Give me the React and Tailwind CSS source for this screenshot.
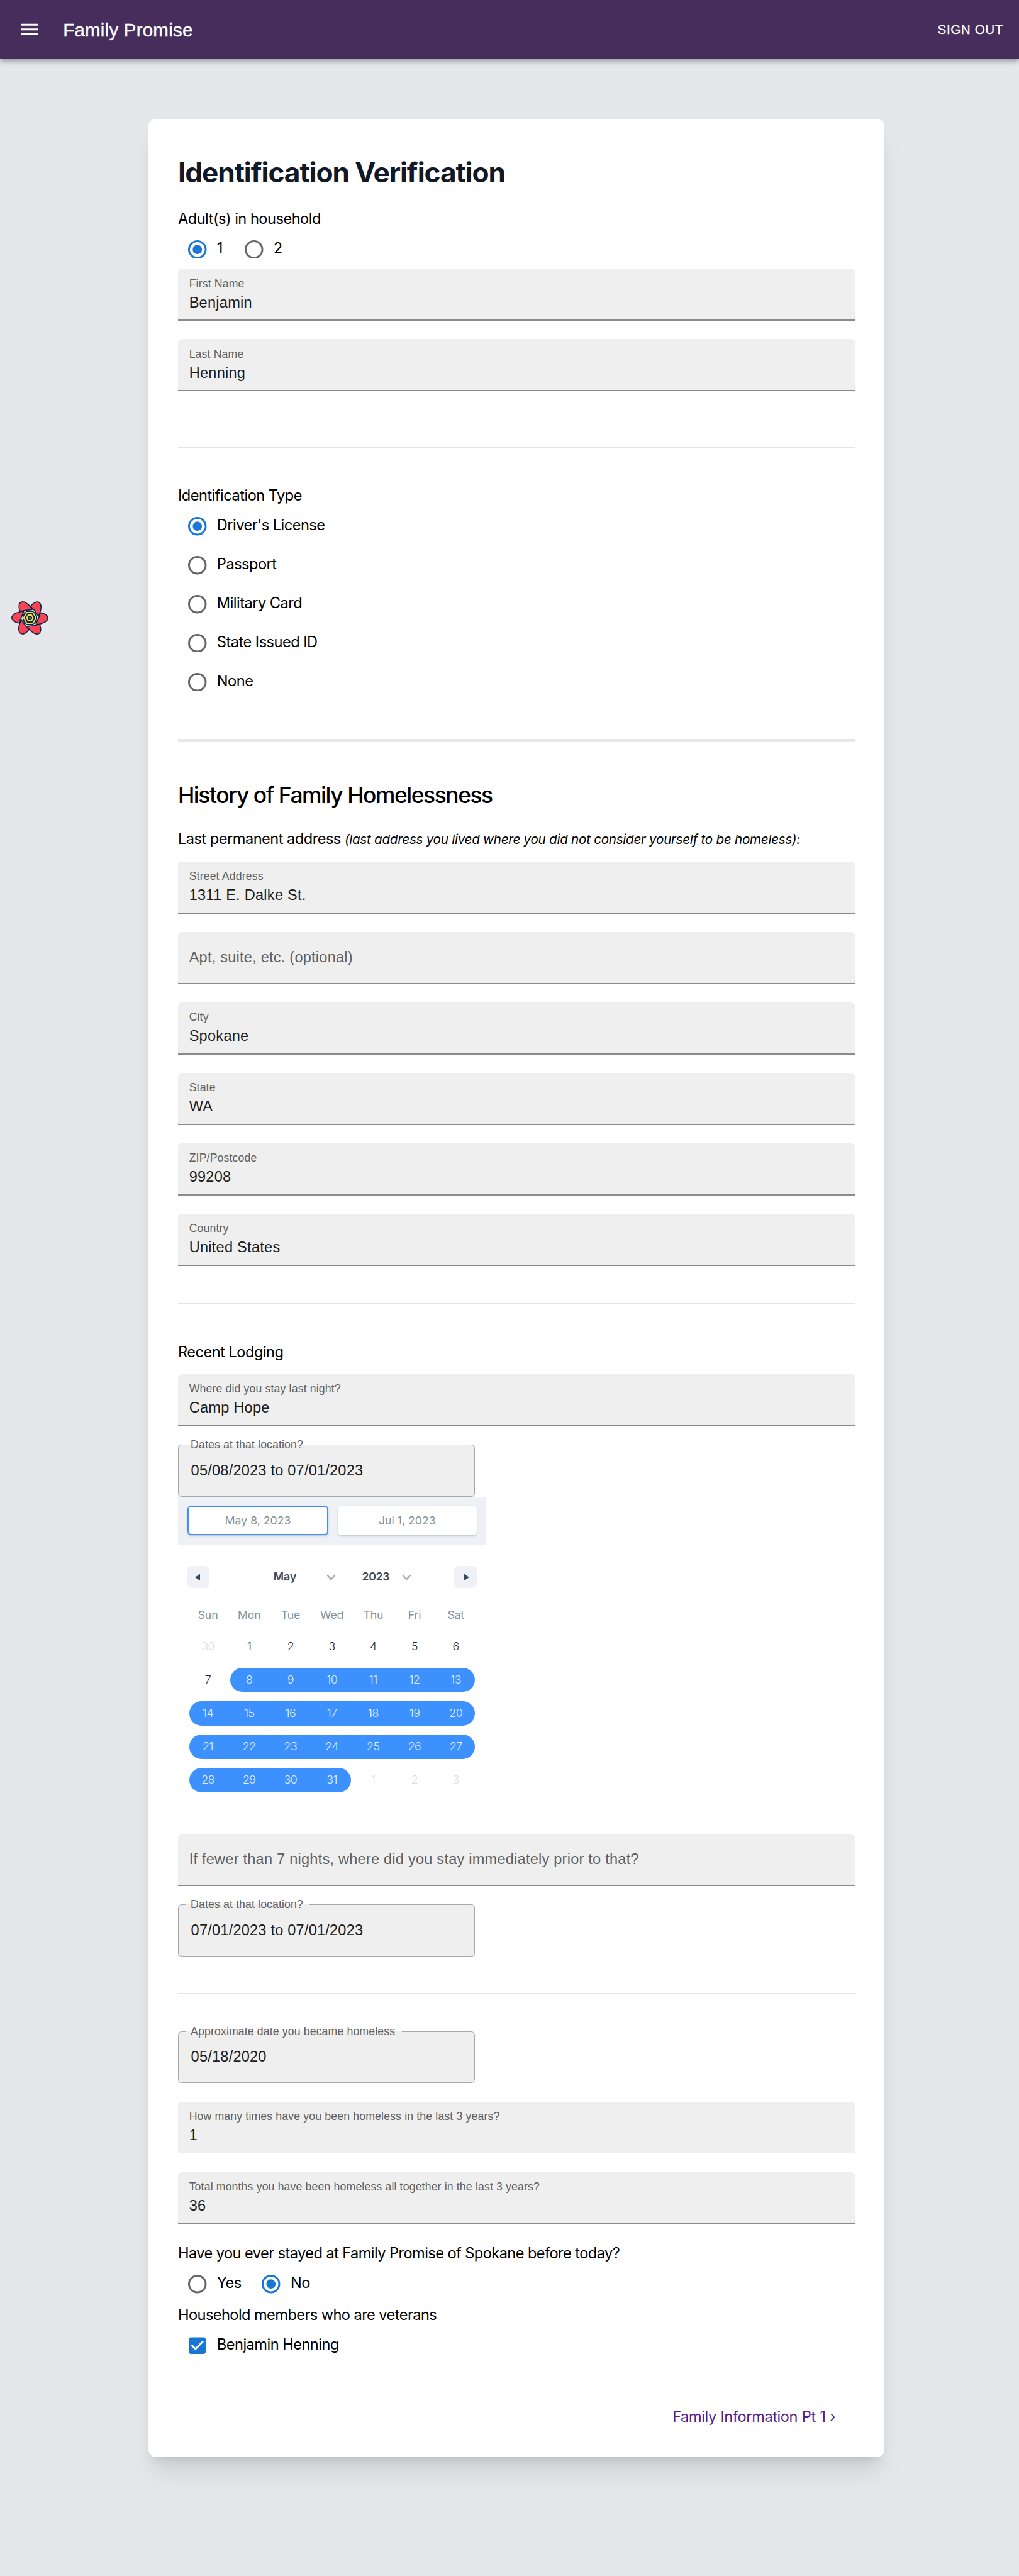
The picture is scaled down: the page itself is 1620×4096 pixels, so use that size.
const UI = "font-[Inter,sans-serif]";

function Header() {
  return (
    <header className="relative z-10 flex h-16 items-center bg-[#472d5b] pl-5 pr-[17px] font-['Liberation_Sans',Arial,sans-serif] text-white shadow-[0_2px_4px_-1px_rgba(0,0,0,0.2),0_4px_5px_0_rgba(0,0,0,0.14),0_1px_10px_0_rgba(0,0,0,0.12)]">
      <svg className="h-6 w-6" viewBox="0 0 24 24" fill="currentColor">
        <path d="M3 18h18v-2H3v2zm0-5h18v-2H3v2zm0-7v2h18V6H3z" />
      </svg>
      <span className="ml-[24px] text-[20px] leading-8 tracking-[0.16px] [-webkit-text-stroke:0.25px_white]">
        Family Promise
      </span>
      <span className="ml-auto text-[14px] leading-6 tracking-[0.4px] [-webkit-text-stroke:0.2px_white]">
        SIGN OUT
      </span>
    </header>
  );
}

function Flower() {
  const angles = [0, 60, 120, 180, 240, 300];
  const petal = "M262 221C289 225 305.500 238 305.500 251C305.500 269 280 286 235 289.500C246 268 256 245 262 221Z";
  return (
    <svg className="absolute left-[12px] top-[648.5px] h-9 w-10" viewBox="72 143 240 216">
      <g fill="#002b47" stroke="#002b47" strokeWidth="13" strokeLinejoin="round">
        {angles.map((a) => (
          <path key={a} d={petal} transform={`rotate(${a} 192 251)`} />
        ))}
      </g>
      <circle cx="192" cy="251" r="48" fill="#002b47" />
      <g fill="#ff4154">
        {angles.map((a) => (
          <path key={a} d={petal} transform={`rotate(${a} 192 251)`} />
        ))}
      </g>
      <g fill="#002b47" stroke="#ffd94c" strokeWidth="8" strokeLinejoin="round">
        <path d="M152 251L172 216H212L232 251L212 286H172Z" />
        <path d="M171 251L181.500 233H202.500L213 251L202.500 269H181.500Z" />
      </g>
      <circle cx="192" cy="251" r="5.500" fill="#ffd94c" />
    </svg>
  );
}

function Heading({ children }) {
  return (
    <div className={`${UI} pt-[0.4px] text-[16px] leading-[23.6px] tracking-[-0.34px] text-black`}>{children}</div>
  );
}

function Field({ label, value }) {
  return (
    <div className="flex h-14 flex-col justify-between rounded-t bg-[#efefef] font-['Liberation_Sans',Arial,sans-serif]">
      {value ? (
        <div className="px-3 pt-[8.3px]">
          <div className="text-[12px] leading-4 tracking-[0.1px] text-[#606060]">{label}</div>
          <div className="pt-[0.4px] text-[16px] leading-6 tracking-[0.17px] text-[#1c1c1c]">{value}</div>
        </div>
      ) : (
        <div className="px-3 pt-[15.5px] text-[16px] leading-6 tracking-[0.15px] text-[#606060]">{label}</div>
      )}
      <div className="h-px bg-[#8b8b8b]" />
    </div>
  );
}

function DateField({ label, value, legendWidth }) {
  return (
    <div className="relative flex h-14 w-80 items-center rounded-t bg-[#efefef] px-[14px] font-['Liberation_Sans',Arial,sans-serif]">
      <span className="text-[16px] leading-6 tracking-[0.14px] text-[#1c1c1c]">{value}</span>
      <fieldset className="absolute inset-x-0 -top-[5px] bottom-0 rounded border border-[#a8a8a8] px-2">
        <legend
          className={`${legendWidth} h-[11px] whitespace-nowrap px-[5px] text-[12px] leading-[10px] tracking-[0.09px] text-[#606060]`}
        >
          {label}
        </legend>
      </fieldset>
    </div>
  );
}

function Radio({ label, checked }) {
  return (
    <div className="flex h-[42px] items-center">
      <div className="flex h-[42px] w-[42px] items-center justify-center">
        <svg className={`h-5 w-5 ${checked ? "text-[#1976d2]" : "text-[#666666]"}`} viewBox="0 0 20 20">
          <circle cx="10" cy="10" r="9" fill="none" stroke="currentColor" strokeWidth="2" />
          {checked && <circle cx="10" cy="10" r="5" fill="currentColor" />}
        </svg>
      </div>
      <span className={`${UI} pb-[3px] text-[16px] leading-6 tracking-[-0.35px] text-black`}>{label}</span>
    </div>
  );
}

function Chevron() {
  return (
    <svg className="h-[7px] w-[10px]" viewBox="0 0 10 7" fill="none" stroke="#a3abb1" strokeWidth="1.500">
      <path d="M0.800 0.800L5 5.600L9.200 0.800" />
    </svg>
  );
}

const WEEKDAYS = ["Sun", "Mon", "Tue", "Wed", "Thu", "Fri", "Sat"];
const WEEKS = [
  [30, 1, 2, 3, 4, 5, 6],
  [7, 8, 9, 10, 11, 12, 13],
  [14, 15, 16, 17, 18, 19, 20],
  [21, 22, 23, 24, 25, 26, 27],
  [28, 29, 30, 31, 1, 2, 3],
];

function Calendar() {
  return (
    <div className={`${UI} h-[364px] w-[332px] bg-white text-[12px]`}>
      <div className="flex h-[52px] gap-[10px] bg-[#f0f1f7] p-[10px]">
        <div className="flex flex-1 items-center justify-center rounded border-[1.4px] border-[#3d91ff] bg-white text-[#849095] shadow-[0_1px_2px_0_rgba(35,57,66,0.21)]">
          May 8, 2023
        </div>
        <div className="flex flex-1 items-center justify-center rounded bg-white text-[#849095] shadow-[0_1px_2px_0_rgba(35,57,66,0.21)]">
          Jul 1, 2023
        </div>
      </div>
      <div className="flex h-[60px] items-center px-[10px] pt-[10px] font-semibold text-[#3e484f]">
        <div className="flex h-6 w-6 items-center justify-center rounded-[5px] bg-[#f0f1f7]">
          <svg className="mr-[2px] h-2 w-[6px]" viewBox="0 0 6 8" fill="#34495e">
            <path d="M6 0V8L0 4Z" />
          </svg>
        </div>
        <div className="ml-[69px] flex w-[67px] items-center justify-between">
          May <Chevron />
        </div>
        <div className="ml-[28.5px] flex w-[53px] items-center justify-between tracking-[-0.2px]">
          2023 <Chevron />
        </div>
        <div className="ml-auto flex h-6 w-6 items-center justify-center rounded-[5px] bg-[#f0f1f7]">
          <svg className="ml-[2px] h-2 w-[6px]" viewBox="0 0 6 8" fill="#34495e">
            <path d="M0 0V8L6 4Z" />
          </svg>
        </div>
      </div>
      <div className="grid h-8 grid-cols-7 items-center px-[10px] text-center tracking-[-0.1px] text-[#849095]">
        {WEEKDAYS.map((d) => (
          <div key={d}>{d}</div>
        ))}
      </div>
      {WEEKS.map((week, w) => (
        <div key={w} className="grid h-9 grid-cols-7 items-center px-[10px] font-light">
          {week.map((day, i) => {
            const passive = (w === 0 && day > 6) || (w === 4 && day < 4);
            const selected = !passive && day >= 8;
            const first = selected && (i === 0 || day === 8);
            const last = selected && (i === 6 || day === 31);
            return (
              <div
                key={i}
                className={`flex h-[26px] items-center justify-center tracking-[-0.3px] ${
                  selected ? "bg-[#3d91ff] text-[#e6f0ff]" : passive ? "text-[#d5dce0]" : "text-[#1d2429]"
                } ${first ? "ml-[2px] rounded-l-full pr-[2px]" : ""} ${last ? "mr-[2px] rounded-r-full pl-[2px]" : ""}`}
              >
                {day}
              </div>
            );
          })}
        </div>
      ))}
    </div>
  );
}

function Divider() {
  return <div className="h-px bg-[#e3e4e8]" />;
}

export default function App() {
  return (
    <div className="min-h-screen overflow-hidden bg-[#e5e7eb]">
      <div className="relative h-[2779px] [zoom:1.4739]">
        <Header />
        <Flower />
        <main className="ml-[160px] mt-16 h-[2523px] w-[794px] rounded-lg bg-white px-8 pt-10 shadow-[0_20px_25px_-5px_rgba(0,0,0,0.1),0_8px_10px_-6px_rgba(0,0,0,0.1)]">
          <h1 className={`${UI} text-[30px] font-bold leading-9 tracking-[-0.74px] text-[#111827]`}>
            Identification Verification
          </h1>

          <div className="mt-5">
            <Heading>Adult(s) in household</Heading>
            <div className="flex">
              <div className="w-[61px]">
                <Radio label="1" checked />
              </div>
              <Radio label="2" />
            </div>
            <div className="flex flex-col gap-5">
              <Field label="First Name" value="Benjamin" />
              <Field label="Last Name" value="Henning" />
            </div>
          </div>

          <div className="mb-10 mt-[60px]">
            <Divider />
          </div>

          <Heading>Identification Type</Heading>
          <Radio label="Driver's License" checked />
          <Radio label="Passport" />
          <Radio label="Military Card" />
          <Radio label="State Issued ID" />
          <Radio label="None" />

          <div className="my-10 h-1 bg-[#e5e7eb]" />

          <h2 className={`${UI} mb-[19px] pt-px text-[24px] font-medium leading-8 tracking-[-0.97px] text-black`}>
            History of Family Homelessness
          </h2>
          <Heading>
            Last permanent address{" "}
            <span className="text-[14px] italic tracking-[-0.18px]">
              (last address you lived where you did not consider yourself to be homeless):
            </span>
          </Heading>
          <div className="mt-3 flex flex-col gap-5">
            <Field label="Street Address" value="1311 E. Dalke St." />
            <Field label="Apt, suite, etc. (optional)" />
            <Field label="City" value="Spokane" />
            <Field label="State" value="WA" />
            <Field label="ZIP/Postcode" value="99208" />
            <Field label="Country" value="United States" />
          </div>

          <div className="my-10">
            <Divider />
          </div>

          <Heading>Recent Lodging</Heading>
          <div className="mt-3 flex flex-col">
            <Field label="Where did you stay last night?" value="Camp Hope" />
            <div className="mt-5">
              <DateField label="Dates at that location?" value="05/08/2023 to 07/01/2023" legendWidth="w-[133px]" />
              <Calendar />
            </div>
            <Field label="If fewer than 7 nights, where did you stay immediately prior to that?" />
            <div className="mt-5">
              <DateField label="Dates at that location?" value="07/01/2023 to 07/01/2023" legendWidth="w-[133px]" />
            </div>
          </div>

          <div className="my-10">
            <Divider />
          </div>

          <div className="flex flex-col gap-5">
            <DateField label="Approximate date you became homeless" value="05/18/2020" legendWidth="w-[233px]" />
            <Field label="How many times have you been homeless in the last 3 years?" value="1" />
            <Field label="Total months you have been homeless all together in the last 3 years?" value="36" />
          </div>

          <div className="mt-5">
            <Heading>
              <span className="tracking-[-0.38px]">
                Have you ever stayed at Family Promise of Spokane before today?
              </span>
            </Heading>
            <div className="flex">
              <div className="w-[79.5px]">
                <Radio label="Yes" />
              </div>
              <Radio label="No" checked />
            </div>
            <Heading>
              <span className="tracking-[-0.38px]">Household members who are veterans</span>
            </Heading>
            <div className="flex h-[42px] items-center">
              <div className="flex w-[42px] justify-center">
                <svg className="h-6 w-6" viewBox="0 0 24 24" fill="#1976d2">
                  <path d="M19 3H5c-1.110 0-2 .9-2 2v14c0 1.100.89 2 2 2h14c1.110 0 2-.9 2-2V5c0-1.100-.89-2-2-2zm-9 14l-5-5 1.410-1.410L10 14.170l7.590-7.590L19 8l-9 9z" />
                </svg>
              </div>
              <span className={`${UI} pb-[3px] text-[16px] leading-6 tracking-[-0.35px] text-black`}>
                Benjamin Henning
              </span>
            </div>
          </div>

          <div className={`${UI} mt-11 flex justify-end pr-5 text-[16px] leading-6 tracking-[-0.27px] text-[#581c87]`}>
            <span className="pr-px [word-spacing:0.3px]">Family Information Pt 1 ›</span>
          </div>
        </main>
      </div>
    </div>
  );
}
